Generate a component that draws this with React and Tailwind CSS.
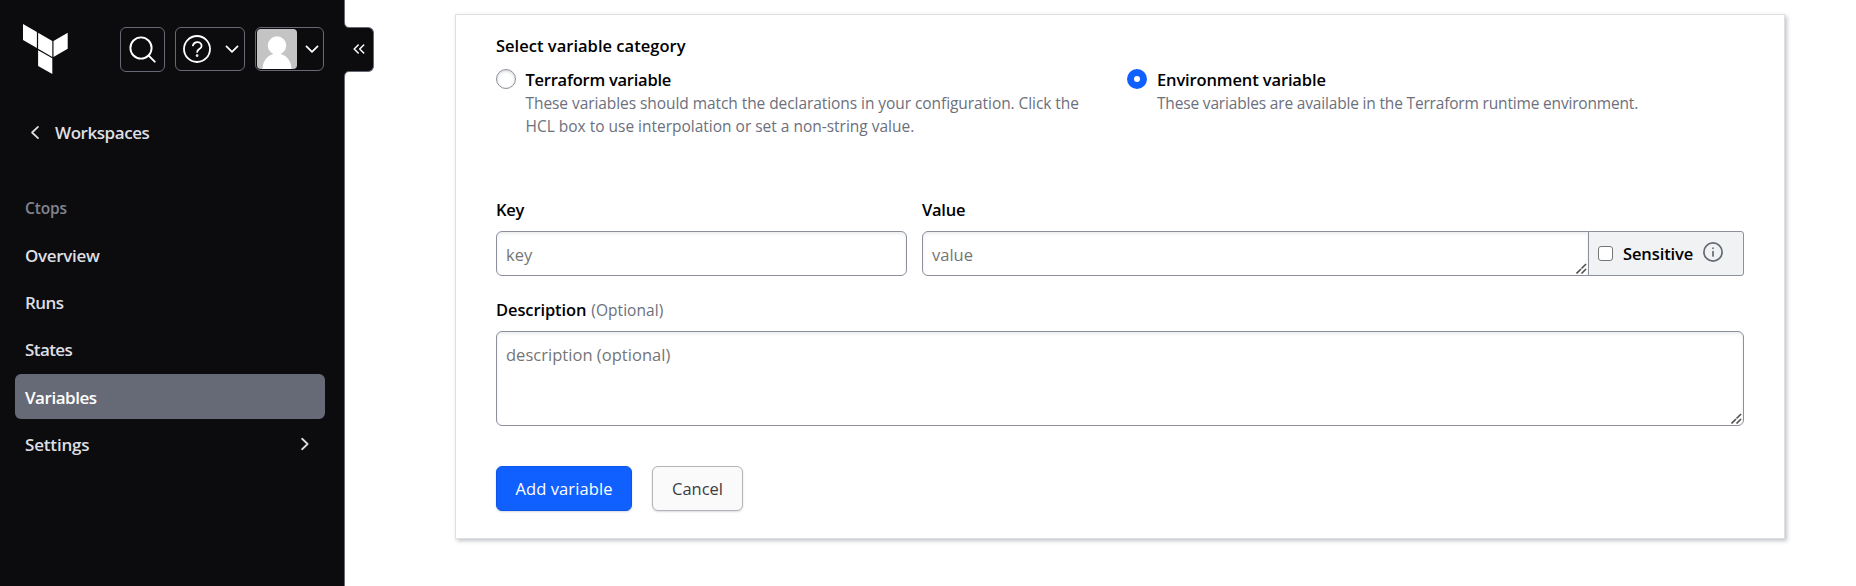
const heading = "text-[16.5px] font-[560] text-black leading-6 whitespace-nowrap";
const hint = "text-[15.5px] leading-[23px] text-[#6c707c] whitespace-nowrap";

function Chevron({ className, d = "M4 8l8 8 8-8", w = 2 }) {
  return (
    <svg className={className} viewBox="0 0 24 24" fill="none" stroke="currentColor" strokeWidth={w} strokeLinecap="round" strokeLinejoin="round">
      <path d={d} />
    </svg>
  );
}

function Logo() {
  return (
    <svg className="w-[46px] h-[51px] shrink-0" viewBox="0 0 46 51" fill="#fff">
      <path d="M0 0l13.900 8v16L0 16z" />
      <path d="M15.100 8.800l14.200 8.200v16l-14.200-8.200z" />
      <path d="M30.500 17l14.200-8.200v16L30.500 33z" />
      <path d="M15.100 26.200l14.200 8v15.800l-14.200-8z" />
    </svg>
  );
}

function Grip() {
  return (
    <svg className="absolute right-[1px] bottom-[1px] w-[11px] h-[11px]" viewBox="0 0 11 11" stroke="#505050" strokeWidth="1.600">
      <path d="M0.500 10.500l10-10M5.500 10.500l5-5" strokeDasharray="6.400 .700" />
    </svg>
  );
}

function NavItem({ children, active, className = "", arrow }) {
  return (
    <div className={"h-[45px] rounded-[6px] pl-[10px] pr-[13px] flex items-center justify-between text-[17px] font-semibold " + (active ? "bg-[#656a76] text-white " : "text-[#dedfe3] ") + className}>
      <span className="pt-[2px]">{children}</span>
      {arrow && <Chevron className="w-[14px] h-[14px]" d="M7 3l9.500 9L7 21" w={3} />}
    </div>
  );
}

function Sidebar() {
  return (
    <aside className="w-[345px] h-full shrink-0 bg-[#0c0c0e] border-r border-[#656a76]">
      <div className="flex items-start pl-[23px] pt-[24px] h-[108px]">
        <Logo />
        <div className="ml-[51px] mt-[3px] w-[45px] h-[45px] rounded-[6px] border border-[#656a76] flex items-center justify-center text-white">
          <svg className="-mt-px -ml-px w-[27px] h-[27px]" viewBox="0 0 27 27" fill="none" stroke="currentColor" strokeWidth="1.900" strokeLinecap="round">
            <circle cx="12" cy="12" r="10.600" />
            <path d="M19.700 19.700l6 6" />
          </svg>
        </div>
        <div className="ml-[10px] mt-[3px] w-[70px] h-[44px] rounded-[6px] border border-[#656a76] flex items-center pl-[7px] text-white">
          <svg className="w-[28px] h-[28px]" viewBox="0 0 28 28" fill="none" stroke="currentColor" strokeWidth="1.800" strokeLinecap="round" strokeLinejoin="round">
            <circle cx="14" cy="14" r="13" />
            <path d="M9.900 10.400c.6-2.100 2.300-3.300 4.400-3.300 2.400 0 4.300 1.600 4.300 3.800 0 3-4.400 3.300-4.400 6" />
            <circle cx="14.100" cy="20.600" r=".5" fill="currentColor" />
          </svg>
          <Chevron className="ml-[14px] w-[14px] h-[14px]" d="M2.500 7.500L12 17l9.500-9.500" w={3} />
        </div>
        <div className="ml-[10px] mt-[3px] w-[69px] h-[44px] rounded-[6px] border border-[#656a76] flex items-center pl-[1px] text-white">
          <svg className="w-[40px] h-[40px] rounded-[4px] bg-[#c4c4c4]" viewBox="0 0 40 40" fill="#fff">
            <circle cx="20" cy="16.500" r="9.200" />
            <path d="M5.500 40c0-9 6.500-15.500 14.500-15.500s14.500 6.500 14.500 15.500z" />
          </svg>
          <Chevron className="ml-[8px] w-[14px] h-[14px]" d="M2.500 7.500L12 17l9.500-9.500" w={3} />
        </div>
      </div>
      <div className="h-[48px] pl-[28px] flex items-center text-[#dedfe3]">
        <Chevron className="w-[15px] h-[15px]" d="M16 3L6.500 12l9.500 9" w={2.8} />
        <span className="ml-[12px] pt-px text-[17px] font-semibold tracking-[-0.44px]">Workspaces</span>
      </div>
      <div className="mt-[39px] pl-[25px] h-[24px] leading-[26px] text-[15.5px] font-semibold text-[#82858f] tracking-[-0.12px]">Ctops</div>
      <nav className="mt-[13px] ml-[15px] w-[310px] flex flex-col gap-[2.300px]">
        <NavItem className="tracking-[-0.32px]">Overview</NavItem>
        <NavItem className="tracking-[-0.56px]">Runs</NavItem>
        <NavItem className="tracking-[-0.58px]">States</NavItem>
        <NavItem active className="tracking-[-0.47px]">Variables</NavItem>
        <NavItem arrow className="tracking-[-0.17px]">Settings</NavItem>
      </nav>
    </aside>
  );
}

const box = "relative border border-[#8c909c] bg-white shadow-[inset_0_2px_3px_rgba(101,106,118,0.12)] text-[16.5px] leading-6 text-[#757575]";

export default function App() {
  return (
    <div className="relative flex w-[1856px] h-[586px] overflow-hidden bg-white font-['Open_Sans','Noto_Sans',sans-serif]">
      <Sidebar />
      <button className="absolute left-[344px] top-[27px] w-[30px] h-[45px] rounded-r-[6px] border border-l-0 border-[#656a76] bg-[#0c0c0e] text-white flex items-center justify-center">
        <svg className="-mt-px w-[12px] h-[10px]" viewBox="0 0 12 10" fill="none" stroke="currentColor" strokeWidth="1.500" strokeLinecap="round" strokeLinejoin="round">
          <path d="M5.200 1L1.200 5l4 4M10.700 1l-4 4 4 4" />
        </svg>
      </button>
      <svg className="absolute left-[344px] top-[22px] w-[5px] h-[55px]" viewBox="0 0 5 55" fill="#0c0c0e" stroke="#656a76">
        <path d="M.5 0c0 3.500 1.500 5.500 4.500 5.500L5 7H0V0" stroke="none" />
        <path d="M.5 55c0-3.500 1.500-5.500 4.500-5.500L5 48H0v7" stroke="none" />
        <path d="M.5 0c0 3.500 1.500 5.500 4.500 5.500M.5 55c0-3.500 1.500-5.500 4.500-5.500" fill="none" />
      </svg>
      <main className="flex-1 pt-[14px] pl-[110px]">
        <div className="w-[1330px] h-[525px] border border-[#dedfe3] bg-white px-[40px] pt-[19px] shadow-[2px_2px_4px_rgba(101,106,118,0.4)]">
          <div className={heading + " tracking-[0.020px]"}>Select variable category</div>
          <div className="flex mt-[10px]">
            <div className="w-[631px] flex">
              <span className="mt-px w-[20px] h-[20px] rounded-full border border-[#8c909c] shadow-[inset_0_1px_3px_rgba(101,106,118,0.3)] shrink-0" />
              <div className="ml-[9.500px]">
                <div className={heading + " tracking-[-0.24px]"}>Terraform variable</div>
                <div className={hint + " tracking-[-0.068px]"}>These variables should match the declarations in your configuration. Click the</div>
                <div className={hint + " tracking-[-0.010px]"}>HCL box to use interpolation or set a non-string value.</div>
              </div>
            </div>
            <div className="flex">
              <span className="mt-px w-[20px] h-[20px] rounded-full bg-[#1060ff] shrink-0 flex items-center justify-center">
                <span className="w-[6px] h-[6px] rounded-full bg-white" />
              </span>
              <div className="ml-[10px]">
                <div className={heading + " tracking-[-0.13px]"}>Environment variable</div>
                <div className={hint + " tracking-[-0.175px]"}>These variables are available in the Terraform runtime environment.</div>
              </div>
            </div>
          </div>
          <div className="mt-[60px] flex">
            <div className="w-[426px]">
              <div className={heading + " tracking-[-0.24px]"}>Key</div>
              <div className={box + " mt-[9px] w-[411px] h-[45px] rounded-[6px] pl-[9px] pt-[11px]"}>key</div>
            </div>
            <div>
              <div className={heading + " tracking-[-0.24px]"}>Value</div>
              <div className="mt-[9px] flex">
                <div className={box + " w-[667px] h-[45px] rounded-l-[6px] pl-[9px] pt-[11px]"}>
                  value
                  <Grip />
                </div>
                <div className="-ml-px w-[156px] h-[45px] rounded-r-[3px] border border-[#8c909c] bg-[#f1f2f3] flex items-start pl-[9px]">
                  <span className="mt-[14px] w-[15px] h-[15px] rounded-[3px] border border-[#767676] bg-white" />
                  <span className={heading + " mt-[10px] ml-[10px] tracking-[-0.11px]"}>Sensitive</span>
                  <svg className="mt-[10px] ml-[10px] w-[20px] h-[20px]" viewBox="0 0 20 20" fill="none" stroke="#656a76" strokeWidth="1.700" strokeLinecap="round">
                    <circle cx="10" cy="10" r="9.100" />
                    <path d="M10 9.500v4.500M10 6.200v.1" />
                  </svg>
                </div>
              </div>
            </div>
          </div>
          <div className="mt-[22px] mb-[9px] flex items-baseline h-6">
            <span className={heading + " tracking-[-0.11px]"}>Description</span>
            <span className="ml-[5px] text-[15.5px] leading-6 text-[#6c707c] tracking-[0.05px]">(Optional)</span>
          </div>
          <div className={box + " h-[95px] w-[1248px] rounded-[6px] pl-[9px] pt-[11px] tracking-[0.03px]"}>
            description (optional)
            <Grip />
          </div>
          <div className="mt-[40px] flex gap-[20px] text-[16.5px]">
            <button className="pt-px w-[136px] h-[45px] rounded-[6px] border border-[#0c56e9] bg-[#1060ff] text-white tracking-[0.09px] shadow-[0_1px_2px_rgba(101,106,118,0.25)]">Add variable</button>
            <button className="pt-px w-[91px] h-[45px] rounded-[6px] border border-[#b2b4ba] bg-[#fafafa] text-[#3b3d45] shadow-[0_1px_2px_rgba(101,106,118,0.25)]">Cancel</button>
          </div>
        </div>
      </main>
    </div>
  );
}
